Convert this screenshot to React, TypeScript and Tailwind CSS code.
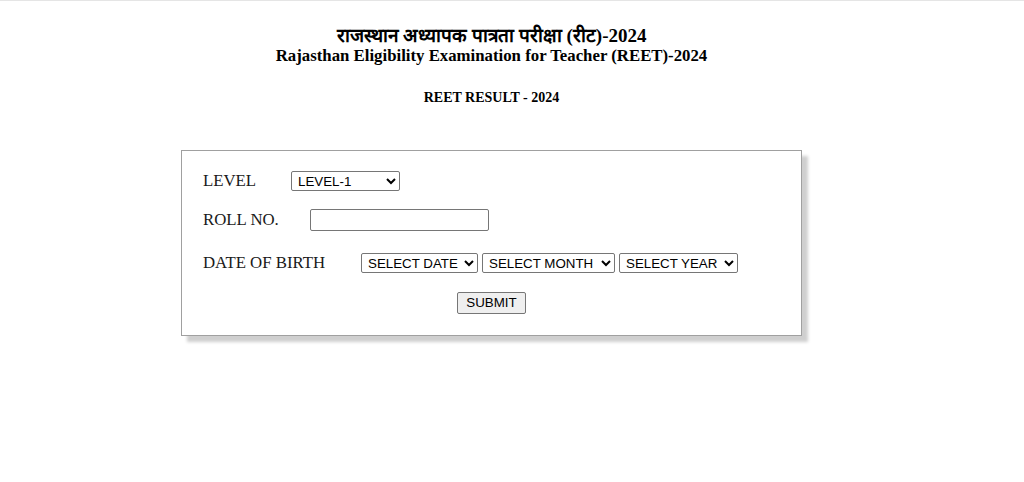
export default function App() {
  const ctrl = "font-['Liberation_Sans',Arial,sans-serif] text-[13.33px] text-black";

  return (
    <div className="min-h-[482px] bg-white font-['Liberation_Serif','Times_New_Roman',serif] text-black">
      <div className="h-px bg-[#e5e5e5]" />
      <div className="w-[983px]">
        <div className="pt-[24px] text-center font-bold">
          <h1 className="text-[19px] leading-[22px]">राजस्थान अध्यापक पात्रता परीक्षा (रीट)-2024</h1>
          <h2 className="text-[16.8px] leading-[18px]">Rajasthan Eligibility Examination for Teacher (REET)-2024</h2>
          <p className="mt-[25px] text-[14px] leading-[16px]">REET RESULT - 2024</p>
        </div>

        {/* Result form */}
        <div className="mx-auto mt-[44px] w-[621px] border border-[#a0a0a0] bg-white px-[21px] pt-[20px] pb-[21px] shadow-[6px_6px_3px_#cfcfcf]">
          <div className="flex h-[20px] items-center text-[16.8px] text-[#1a1a1a]">
            <span className="w-[88px]">LEVEL</span>
            <select className={`${ctrl} h-[20px] w-[109px] rounded-[2px] border border-[#767676] bg-white pl-[2px]`}>
              <option>LEVEL-1</option>
              <option>LEVEL-2</option>
            </select>
          </div>

          <div className="mt-[18px] flex h-[22px] items-center text-[16.8px] text-[#1a1a1a]">
            <span className="w-[107px]">ROLL NO.</span>
            <input type="text" className={`${ctrl} h-[22px] w-[179px] rounded-[2px] border border-[#767676] bg-white px-[2px]`} />
          </div>

          <div className="mt-[22px] flex h-[20px] items-center text-[16.8px] text-[#1a1a1a]">
            <span className="w-[158px]">DATE OF BIRTH</span>
            <div className="flex gap-[4px]">
              <select className={`${ctrl} h-[20px] w-[117px] rounded-[2px] border border-[#767676] bg-white pl-[2px]`}>
                <option>SELECT DATE</option>
              </select>
              <select className={`${ctrl} h-[20px] w-[133px] rounded-[2px] border border-[#767676] bg-white pl-[2px]`}>
                <option>SELECT MONTH</option>
              </select>
              <select className={`${ctrl} h-[20px] w-[119px] rounded-[2px] border border-[#767676] bg-white pl-[2px]`}>
                <option>SELECT YEAR</option>
              </select>
            </div>
          </div>

          <div className="mt-[19px] flex justify-center">
            <button className={`${ctrl} h-[22px] w-[69px] rounded-[2px] border border-[#767676] bg-[#efefef]`}>SUBMIT</button>
          </div>
        </div>
      </div>
    </div>
  );
}
